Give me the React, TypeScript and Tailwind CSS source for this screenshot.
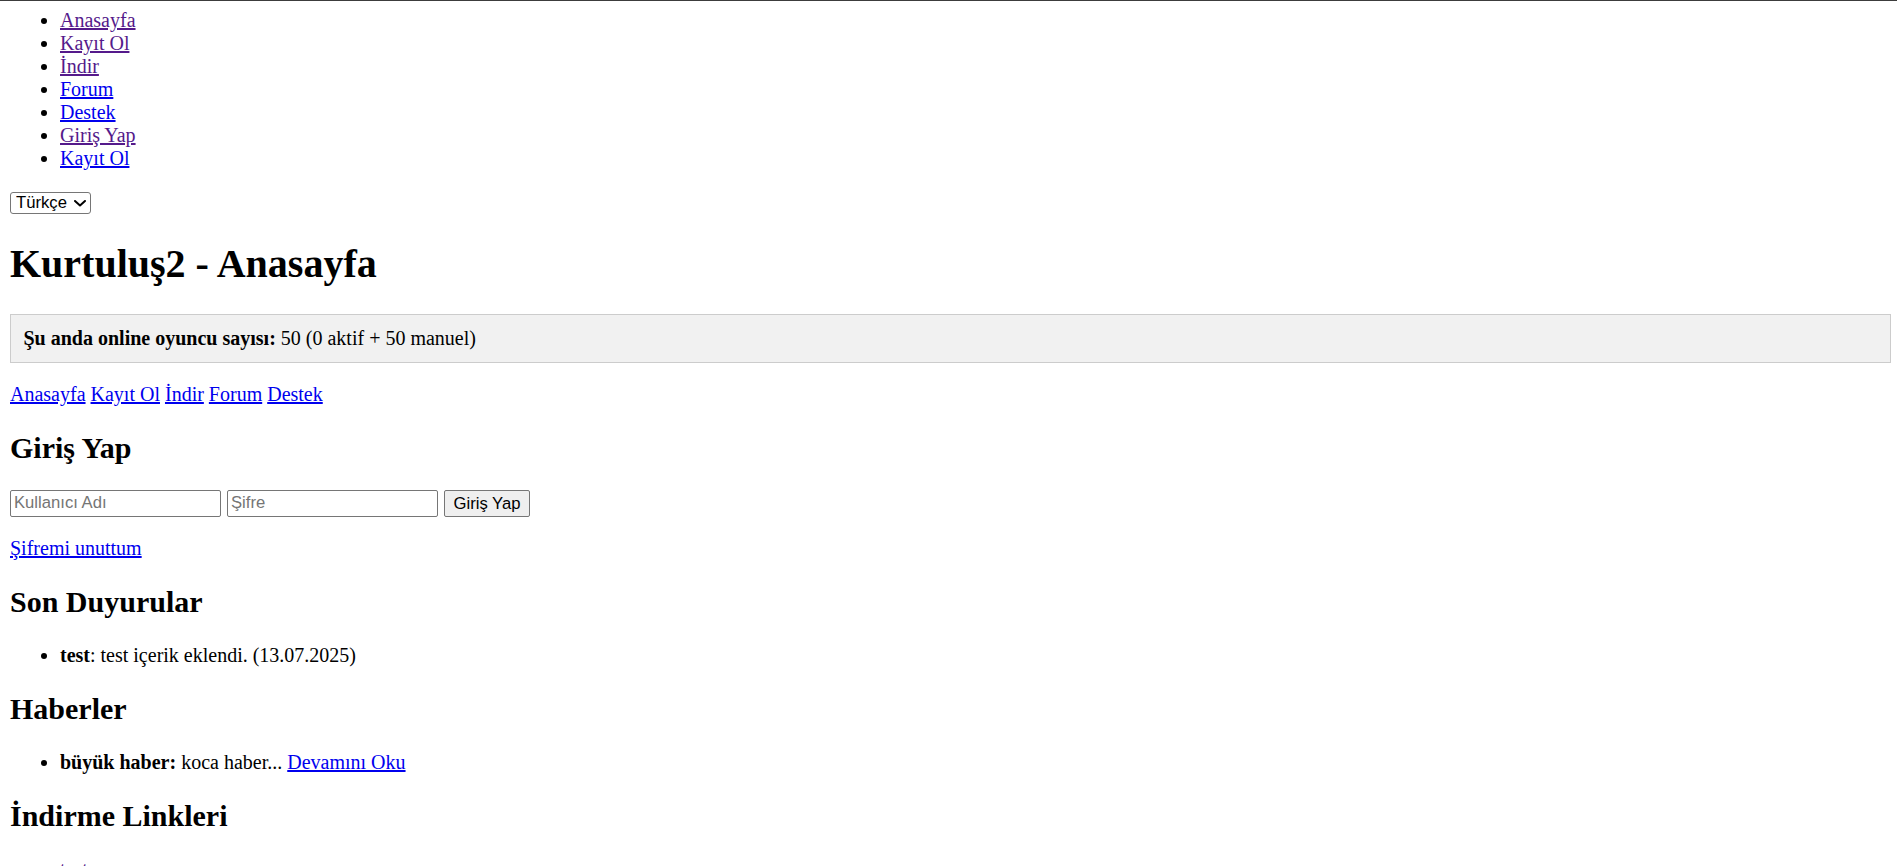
import React from "react";

const visited = "text-[#551a8b] underline";
const unvisited = "text-[#0000ee] underline";

export default function App() {
  return (
    <div className="h-screen overflow-hidden border-t border-[#3c3c3c] bg-white pt-[8px] pl-[10px] pr-[6px] font-['Liberation_Serif','Times_New_Roman',serif] text-[20px] leading-[23px] text-black">
      <ul className="list-disc pl-[50px]">
        <li>
          <a className={visited} href="#">Anasayfa</a>
        </li>
        <li>
          <a className={visited} href="#">Kayıt Ol</a>
        </li>
        <li>
          <a className={visited} href="#">İndir</a>
        </li>
        <li>
          <a className={unvisited} href="#">Forum</a>
        </li>
        <li>
          <a className={unvisited} href="#">Destek</a>
        </li>
        <li>
          <a className={visited} href="#">Giriş Yap</a>
        </li>
        <li>
          <a className={unvisited} href="#">Kayıt Ol</a>
        </li>
      </ul>

      <div className="mt-[20px] h-[23px]">
        <div className="relative inline-flex h-[22px] w-[81px] items-center">
          <select
            className="h-[22px] w-[81px] appearance-none rounded-[3px] border border-[#767676] bg-white pl-[5px] pr-[18px] font-['Liberation_Sans',Arial,sans-serif] text-[16.67px] leading-[19px] text-black"
            defaultValue="tr"
          >
            <option value="tr">Türkçe</option>
            <option value="en">English</option>
          </select>
          <svg
            className="pointer-events-none absolute right-[5px] top-[8px]"
            width="12"
            height="7"
            viewBox="0 0 12 7"
            fill="none"
          >
            <path d="M1 1l5 4.5L11 1" stroke="#000" strokeWidth="2" strokeLinecap="round" strokeLinejoin="round" />
          </svg>
        </div>
      </div>

      <h1 className="my-[27px] text-[40px] font-bold leading-[47px]">Kurtuluş2 - Anasayfa</h1>

      <div className="border border-[#cccccc] bg-[#f1f1f1] px-[12.5px] py-[12px]">
        <strong className="font-bold">Şu anda online oyuncu sayısı:</strong> 50 (0 aktif + 50 manuel)
      </div>

      <p className="my-[20px]">
        <a className={unvisited} href="#">Anasayfa</a> <a className={unvisited} href="#">Kayıt Ol</a>{" "}
        <a className={unvisited} href="#">İndir</a> <a className={unvisited} href="#">Forum</a>{" "}
        <a className={unvisited} href="#">Destek</a>
      </p>

      <h2 className="my-[25px] text-[30px] font-bold leading-[34px]">Giriş Yap</h2>

      <form className="flex h-[27px] items-start gap-[6px]" onSubmit={(e) => e.preventDefault()}>
        <input
          type="text"
          placeholder="Kullanıcı Adı"
          className="h-[26.5px] w-[211px] rounded-[2px] border border-[#767676] bg-white px-[3px] font-['Liberation_Sans',Arial,sans-serif] text-[16.67px] text-black placeholder:text-[#757575]"
        />
        <input
          type="password"
          placeholder="Şifre"
          className="h-[26.5px] w-[211px] rounded-[2px] border border-[#767676] bg-white px-[3px] font-['Liberation_Sans',Arial,sans-serif] text-[16.67px] text-black placeholder:text-[#757575]"
        />
        <button
          type="submit"
          className="h-[26.5px] w-[86px] rounded-[2px] border border-[#767676] bg-[#efefef] font-['Liberation_Sans',Arial,sans-serif] text-[16.67px] text-black"
        >
          Giriş Yap
        </button>
      </form>

      <p className="my-[20px]">
        <a className={unvisited} href="#">Şifremi unuttum</a>
      </p>

      <h2 className="my-[25px] text-[30px] font-bold leading-[34px]">Son Duyurular</h2>
      <ul className="my-[20px] list-disc pl-[50px]">
        <li>
          <strong className="font-bold">test</strong>: test içerik eklendi. (13.07.2025)
        </li>
      </ul>

      <h2 className="my-[25px] text-[30px] font-bold leading-[34px]">Haberler</h2>
      <ul className="my-[20px] list-disc pl-[50px]">
        <li>
          <strong className="font-bold">büyük haber:</strong> koca haber...{" "}
          <a className={unvisited} href="#">Devamını Oku</a>
        </li>
      </ul>

      <h2 className="my-[25px] text-[30px] font-bold leading-[34px]">İndirme Linkleri</h2>
      <ul className="my-[20px] list-disc pl-[50px]">
        <li>
          <a className={visited} href="#">test</a>
        </li>
      </ul>
    </div>
  );
}
